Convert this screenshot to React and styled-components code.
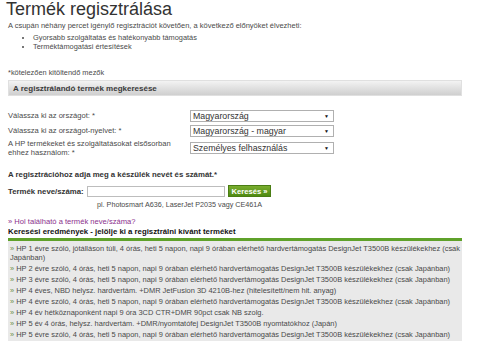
import styled, { createGlobalStyle } from "styled-components";

const GlobalStyle = createGlobalStyle`
  html, body {
    margin: 0;
    padding: 0;
    background: #fff;
  }
  body {
    font-family: "Liberation Sans", Arial, sans-serif;
    color: #4a4a4a;
    overflow: hidden;
  }
`;

const Page = styled.div`
  width: 454px;
  padding: 1px 0 0 8px;
`;

const Title = styled.h1`
  margin: 0 0 0 -2px;
  font-size: 18px;
  line-height: 17px;
  font-weight: normal;
  color: #333;
`;

const Intro = styled.p`
  margin: 3px 0 0;
  font-size: 7.5px;
  line-height: 9px;
`;

const Benefits = styled.ul`
  margin: 4px 0 0;
  padding-left: 25px;
  font-size: 7.4px;
  line-height: 8.5px;
  list-style: disc;
`;

const Note = styled.p`
  margin: 17px 0 0;
  font-size: 7.4px;
  line-height: 9px;
`;

const SectionBar = styled.div`
  margin-top: 3px;
  height: 16px;
  padding-left: 4px;
  display: flex;
  align-items: center;
  background: linear-gradient(#f3f3f3, #cfcfcf);
  border: 1px solid #e0e0e0;
  box-sizing: border-box;
  font-size: 8px;
  font-weight: bold;
  color: #3a3a3a;
`;

const Form = styled.div`
  margin-top: 14px;
  display: grid;
  grid-template-columns: 182px 144px;
  row-gap: 3px;
  align-items: center;
`;

const Label = styled.div`
  font-size: 7.6px;
  line-height: 8.5px;
  align-self: ${({ $top }) => ($top ? "start" : "center")};
`;

const SelectBox = styled.div`
  height: 12px;
  box-sizing: border-box;
  border: 1px solid #b0b0b0;
  background: #fff;
  display: flex;
  align-items: center;
  justify-content: space-between;
  padding: 0 4px 0 2px;
  font-size: 8.8px;
  color: #333;
  margin-top: ${({ $gap }) => $gap || 0}px;
  align-self: ${({ $top }) => ($top ? "start" : "center")};
`;

const Arrow = styled.span`
  font-size: 5px;
  color: #111;
`;

const Heading = styled.div`
  margin-top: 13px;
  font-size: 7.8px;
  font-weight: bold;
  color: #333;
`;

const SearchRow = styled.div`
  margin-top: 6px;
  display: flex;
  align-items: center;
`;

const FieldLabel = styled.span`
  width: 79px;
  font-size: 7.8px;
  font-weight: bold;
  color: #333;
`;

const TextInput = styled.div`
  width: 138px;
  height: 11px;
  border: 1px solid #bdbdbd;
  box-sizing: border-box;
  background: #fff;
`;

const SearchButton = styled.span`
  margin-left: 3px;
  width: 43px;
  height: 12px;
  box-sizing: border-box;
  display: flex;
  align-items: center;
  justify-content: center;
  background: linear-gradient(#79ad2e, #4f8a12);
  border: 1px solid #4a7d14;
  color: #fff;
  font-size: 7.6px;
  font-weight: bold;
`;

const Example = styled.div`
  margin: 3px 0 0 89px;
  font-size: 7.2px;
  line-height: 9px;
`;

const HelpLink = styled.div`
  margin-top: 8px;
  font-size: 7.6px;
  line-height: 9px;
  color: #8b2f8c;
`;

const ResultsTitle = styled.div`
  margin-top: 1px;
  padding-bottom: 2px;
  font-size: 7.8px;
  line-height: 9px;
  font-weight: bold;
  color: #111;
  border-bottom: 3px solid #5fa12a;
`;

const Results = styled.ul`
  margin: 0;
  padding: 3px 0 2px 2px;
  list-style: none;
  background: #e9e9e9;
  display: flex;
  flex-direction: column;
  gap: 2px;
`;

const Result = styled.li`
  font-size: 7.45px;
  line-height: 9px;
  white-space: nowrap;
  color: #4a4a4a;

  &::before {
    content: "» ";
    color: #6b8f4a;
  }
`;

const results = [
  "HP 2 évre szóló, 4 órás, heti 5 napon, napi 9 órában elérhető hardvertámogatás DesignJet T3500B készülékekhez (csak Japánban)",
  "HP 3 évre szóló, 4 órás, heti 5 napon, napi 9 órában elérhető hardvertámogatás DesignJet T3500B készülékekhez (csak Japánban)",
  "HP 4 éves, NBD helysz. hardvertám. +DMR JetFusion 3D 4210B-hez (hitelesített/nem hit. anyag)",
  "HP 4 évre szóló, 4 órás, heti 5 napon, napi 9 órában elérhető hardvertámogatás DesignJet T3500B készülékekhez (csak Japánban)",
  "HP 4 év hétköznaponként napi 9 óra 3CD CTR+DMR 90pct csak NB szolg.",
  "HP 5 év 4 órás, helysz. hardvertám. +DMR/nyomtatófej DesignJet T3500B nyomtatókhoz (Japán)",
  "HP 5 évre szóló, 4 órás, heti 5 napon, napi 9 órában elérhető hardvertámogatás DesignJet T3500B készülékekhez (csak Japánban)",
];

export default function App() {
  return (
    <>
      <GlobalStyle />
      <Page>
        <Title>Termék regisztrálása</Title>
        <Intro>
          A csupán néhány percet igénylő regisztrációt követően, a következő előnyöket élvezheti:
        </Intro>
        <Benefits>
          <li>Gyorsabb szolgáltatás és hatékonyabb támogatás</li>
          <li>Terméktámogatási értesítések</li>
        </Benefits>
        <Note>*kötelezően kitöltendő mezők</Note>

        <SectionBar>A regisztrálandó termék megkeresése</SectionBar>

        <Form>
          <Label>Válassza ki az országot: *</Label>
          <SelectBox>
            Magyarország <Arrow>▼</Arrow>
          </SelectBox>
          <Label>Válassza ki az országot-nyelvet: *</Label>
          <SelectBox>
            Magyarország - magyar <Arrow>▼</Arrow>
          </SelectBox>
          <Label $top>
            A HP termékeket és szolgáltatásokat elsősorban
            <br />
            ehhez használom: *
          </Label>
          <SelectBox $gap={2} $top>
            Személyes felhasználás <Arrow>▼</Arrow>
          </SelectBox>
        </Form>

        <Heading>A regisztrációhoz adja meg a készülék nevét és számát.*</Heading>
        <SearchRow>
          <FieldLabel>Termék neve/száma:</FieldLabel>
          <TextInput />
          <SearchButton>Keresés »</SearchButton>
        </SearchRow>
        <Example>pl. Photosmart A636, LaserJet P2035 vagy CE461A</Example>

        <HelpLink>» Hol található a termék neve/száma?</HelpLink>
        <ResultsTitle>Keresési eredmények - jelölje ki a regisztrálni kívánt terméket</ResultsTitle>
        <Results>
          <Result>
            HP 1 évre szóló, jótálláson túli, 4 órás, heti 5 napon, napi 9 órában elérhető hardvertámogatás DesignJet T3500B készülékekhez (csak
            <br />
            Japánban)
          </Result>
          {results.map((r) => (
            <Result key={r}>{r}</Result>
          ))}
        </Results>
      </Page>
    </>
  );
}
